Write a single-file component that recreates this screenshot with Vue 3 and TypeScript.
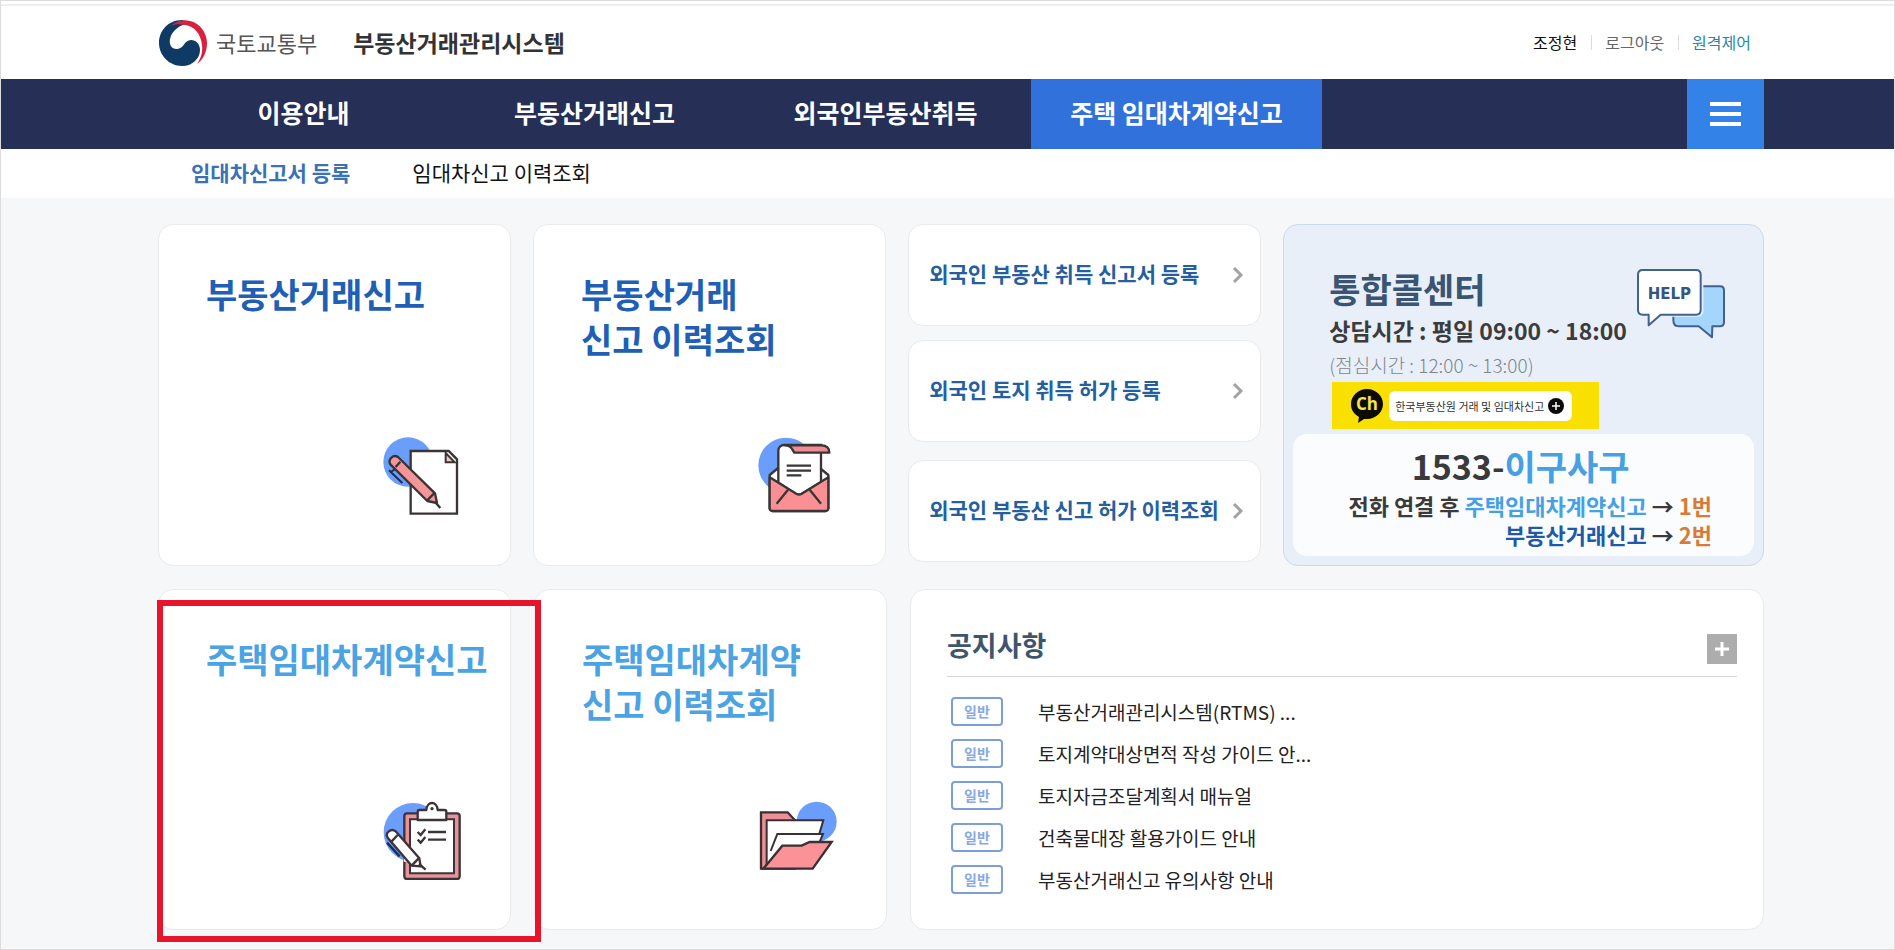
<script setup lang="ts">
interface MenuItem {
  label: string
  active?: boolean
}

const mainMenu: MenuItem[] = [
  { label: '이용안내' },
  { label: '부동산거래신고' },
  { label: '외국인부동산취득' },
  { label: '주택 임대차계약신고', active: true },
]

const subMenu: MenuItem[] = [
  { label: '임대차신고서 등록', active: true },
  { label: '임대차신고 이력조회' },
]

const foreignLinks: string[] = [
  '외국인 부동산 취득 신고서 등록',
  '외국인 토지 취득 허가 등록',
  '외국인 부동산 신고 허가 이력조회',
]

const notices: string[] = [
  '부동산거래관리시스템(RTMS) ...',
  '토지계약대상면적 작성 가이드 안...',
  '토지자금조달계획서 매뉴얼',
  '건축물대장 활용가이드 안내',
  '부동산거래신고 유의사항 안내',
]
</script>

<template>
  <div class="page">
    <header class="header">
      <a href="#" class="brand">
        <svg class="emblem" viewBox="7 7 50 48" aria-hidden="true">
          <path fill="#0f3a66" d="M31 8C17 8 8 19 8 31s10 23 23 23c11 0 18-8 18-16 0-6-4-10-9-10-7 0-7 9-14 9-6 0-8-5-7-10 2-9 10-14 19-16-3-2-6-3-7-3Z" />
          <path fill="#d9213f" d="M20 14c5-5 12-7 19-5 10 2 17 12 17 22 0 9-4 17-10 21 4-6 6-12 5-19C50 22 43 14 34 13c-6-1-10-1-14 1Z" />
        </svg>
        <span class="ministry">국토교통부</span>
        <strong class="system">부동산거래관리시스템</strong>
      </a>
      <div class="user">
        <span class="user-name">조정현</span>
        <a href="#" class="logout">로그아웃</a>
        <a href="#" class="remote">원격제어</a>
      </div>
    </header>

    <nav class="main-nav">
      <a v-for="item in mainMenu" :key="item.label" href="#" class="main-link" :class="{ active: item.active }">{{ item.label }}</a>
      <button type="button" class="all-menu" aria-label="전체메뉴">
        <span class="bar"></span>
        <span class="bar"></span>
        <span class="bar"></span>
      </button>
    </nav>

    <nav class="sub-nav">
      <a v-for="item in subMenu" :key="item.label" href="#" class="sub-link" :class="{ active: item.active }">{{ item.label }}</a>
    </nav>

    <main class="content">
      <div class="row row-top">
        <a href="#" class="card tile deal">
          <h2 class="tile-title">부동산거래신고</h2>
          <svg class="tile-icon" viewBox="700 660 240 240" aria-hidden="true">
            <circle cx="775" cy="738" r="74" fill="#6b9dfb" />
            <path d="M783 705h114l25 25v163H783Z" fill="#fff" stroke="#3a3436" stroke-width="7" />
            <path d="M888 711v28h27Z" fill="#f8c4c6" stroke="#3a3436" stroke-width="6" />
            <path d="M718 763l40 38M723 768l16-10" fill="none" stroke="#1d2c55" stroke-width="6" />
            <path d="M722 745c-8-14 8-31 23-22l111 109 6 29-29-6Z" fill="#f49697" stroke="#3a3436" stroke-width="7" stroke-linejoin="round" />
            <path d="M738 753l14-16M833 853l21-22M856 858l16 18" fill="none" stroke="#3a3436" stroke-width="7" />
          </svg>
        </a>

        <a href="#" class="card tile deal">
          <h2 class="tile-title">부동산거래<br />신고 이력조회</h2>
          <svg class="tile-icon" viewBox="715 660 240 240" aria-hidden="true">
            <circle cx="799" cy="748" r="83" fill="#6b9dfb" />
            <path d="M750 777l88-72 88 72v100l-8 8H758l-8-8Z" fill="#fff" stroke="#3a3436" stroke-width="7" stroke-linejoin="round" />
            <path d="M776 800v-96c0-12 9-17 18-17h110v112l-60 36-16 0Z" fill="#fff" stroke="#3a3436" stroke-width="7" />
            <path d="M797 688h108c16 0 24 9 24 22H824c-4-2-5-22-27-22Z" fill="#f08c93" stroke="#3a3436" stroke-width="7" stroke-linejoin="round" />
            <path d="M801 749h73M801 764h73M801 778h44" stroke="#3a3436" stroke-width="7" />
            <path d="M750 784l81 50q7 4 14 0l81-50v93q0 8-8 8H758q-8 0-8-8Z" fill="#fb9094" stroke="#3a3436" stroke-width="7" stroke-linejoin="round" />
            <path d="M805 821l-34 42M870 821l34 42" stroke="#3a3436" stroke-width="7" />
          </svg>
        </a>

        <div class="foreign">
          <a v-for="label in foreignLinks" :key="label" href="#" class="card foreign-link">
            <span class="foreign-label">{{ label }}</span>
            <svg class="chevron" viewBox="0 0 12 18" aria-hidden="true">
              <path d="M2 2l7 7-7 7" fill="none" stroke="#a3a3a3" stroke-width="3" />
            </svg>
          </a>
        </div>

        <section class="card call-center">
          <div class="call-head">
            <div class="call-info">
              <h2 class="call-title">통합콜센터</h2>
              <p class="call-hours">상담시간 : 평일 09:00 ~ 18:00</p>
              <p class="call-lunch">(점심시간 : 12:00 ~ 13:00)</p>
            </div>
            <svg class="help-icon" viewBox="1095 155 276 225" role="img" aria-label="HELP">
              <path d="M1224 216h126q12 0 12 12v96q0 12-12 12h-23l-1 33-40-33h-60q-16 0-16-18v-90q0-12 14-12Z" fill="#a4d5fd" stroke="#41618e" stroke-width="6" stroke-linejoin="round" />
              <path d="M1116 160h166q18 0 18 18v111q0 18-18 18h-118l-38 36v-36h-10q-20 0-20-18V178q0-18 20-18Z" fill="#e8eff8" />
              <path d="M1118 167h160q14 0 14 14v106q0 14-14 14h-106l-36 32v-32h-18q-14 0-14-14V181q0-14 14-14Z" fill="#fff" stroke="#41618e" stroke-width="6" stroke-linejoin="round" />
              <text x="1198" y="254" text-anchor="middle" class="help-text">HELP</text>
            </svg>
          </div>
          <a href="#" class="kakao">
            <svg class="kakao-icon" viewBox="0 0 34 36" aria-hidden="true">
              <path d="M17 1c9 0 16 7 16 15s-7 15-16 15l-3 0-6 4 1-6C4 26 1 22 1 16 1 8 8 1 17 1Z" fill="#0c0b00" />
              <text x="17" y="22" text-anchor="middle" class="kakao-ch">Ch</text>
            </svg>
            <span class="kakao-pill">
              <span>한국부동산원 거래 및 임대차신고</span>
              <svg class="kakao-plus" viewBox="0 0 16 16" aria-hidden="true">
                <circle cx="8" cy="8" r="8" fill="#0c0b0b" />
                <path d="M8 4v8M4 8h8" stroke="#fff" stroke-width="1.5" />
              </svg>
            </span>
          </a>
          <div class="phone">
            <p class="phone-number">1533-<span class="sky">이구사구</span></p>
            <p class="phone-line">전화 연결 후 <span class="sky">주택임대차계약신고</span> → <span class="orange">1번</span></p>
            <p class="phone-line"><span class="blue">부동산거래신고</span> → <span class="orange">2번</span></p>
          </div>
        </section>
      </div>

      <div class="row row-bottom">
        <div class="marked">
          <a href="#" class="card tile lease">
            <h2 class="tile-title">주택임대차계약신고</h2>
            <svg class="tile-icon" viewBox="700 660 240 240" aria-hidden="true">
              <circle cx="790" cy="757" r="88" fill="#6b9dfb" />
              <rect x="764" y="700" width="166" height="197" rx="8" fill="#e8929a" stroke="#3d3338" stroke-width="7" />
              <path d="M781 718h132v162H781Z" fill="#fff" stroke="#3d3338" stroke-width="6" />
              <path d="M804 720v-24q0-6 6-6h20c2-28 32-28 34 0h20q6 0 6 6v24Z" fill="#fff" stroke="#3d3338" stroke-width="7" stroke-linejoin="round" />
              <circle cx="847" cy="686" r="5" fill="#3d3338" />
              <path d="M804 756l9 9 14-17M804 779l9 9 14-17M835 756h54M835 779h54" fill="none" stroke="#3d3338" stroke-width="7" />
              <path d="M712 788l38 41" fill="none" stroke="#1d2c55" stroke-width="7" />
              <path d="M762 790v55h28Z" fill="#fff" />
              <path d="M714 773c-9-14 10-30 24-19l71 81 4 24-27-2Z" fill="#fff" stroke="#3d3338" stroke-width="7" stroke-linejoin="round" />
              <path d="M726 784l18-19M786 857l21-22M808 852l20 17" fill="none" stroke="#3d3338" stroke-width="7" />
            </svg>
          </a>
          <span class="marker" aria-hidden="true"></span>
        </div>

        <a href="#" class="card tile lease">
          <h2 class="tile-title">주택임대차계약<br />신고 이력조회</h2>
          <svg class="tile-icon" viewBox="715 660 240 240" aria-hidden="true">
            <circle cx="888" cy="725" r="60" fill="#6b9dfb" />
            <path d="M721 697h80l22 24v145H721Z" fill="#ee8f97" stroke="#3a3033" stroke-width="7" />
            <path d="M738 721h170l-18 60-140 72h-12Z" fill="#fff" stroke="#3a3033" stroke-width="6" />
            <path d="M750 813l20-51h137l-10 24-140 62" fill="#fff" stroke="#3a3033" stroke-width="6" />
            <path d="M728 866l57-69h58l24-11h66l-57 80Z" fill="#fb9298" stroke="#3a3033" stroke-width="7" />
          </svg>
        </a>

        <section class="card notice">
          <div class="notice-head">
            <h2 class="notice-title">공지사항</h2>
            <button type="button" class="more" aria-label="공지사항 더보기">
              <svg class="more-icon" viewBox="0 0 14 14" aria-hidden="true">
                <path d="M7 0v14M0 7h14" stroke="#fff" stroke-width="3" />
              </svg>
            </button>
          </div>
          <ul class="notice-list">
            <li v-for="title in notices" :key="title" class="notice-row">
              <span class="badge">일반</span>
              <a href="#" class="notice-link">{{ title }}</a>
            </li>
          </ul>
        </section>
      </div>
    </main>
  </div>
</template>

<style>
body {
  margin: 0;
}
</style>

<style scoped>
.page {
  box-sizing: border-box;
  min-height: 100vh;
  border: 1px solid #dcdcdc;
  background: #f5f7f9;
  color: #111;
  font-family: "Noto Sans CJK KR", sans-serif;
}

a {
  color: inherit;
  text-decoration: none;
}

h2,
p,
ul {
  margin: 0;
  padding: 0;
}

button {
  border: 0;
  padding: 0;
  cursor: pointer;
}

.header,
.main-nav,
.sub-nav,
.content {
  padding-left: 157px;
  padding-right: 130px;
}

.header {
  box-sizing: border-box;
  height: 78px;
  padding-top: 3px;
  display: flex;
  align-items: center;
  justify-content: space-between;
  background: #fff;
  box-shadow: inset 0 3px 0 #fff, inset 0 5px 0 #eee;
}

.brand {
  display: flex;
  align-items: center;
}

.emblem {
  width: 50px;
  height: 48px;
  margin-top: 3px;
}

.ministry {
  margin-left: 8px;
  font-size: 22px;
  line-height: 32px;
  color: #555;
}

.system {
  margin-left: 36px;
  font-size: 23px;
  line-height: 32px;
  color: #333;
}

.user {
  display: flex;
  align-items: center;
  font-size: 16px;
  line-height: 20px;
  padding-right: 13px;
}

.logout,
.remote {
  position: relative;
  margin-left: 28px;
}

.logout::before,
.remote::before {
  content: "";
  position: absolute;
  left: -14px;
  top: 3px;
  height: 15px;
  border-left: 1px solid #ddd;
}

.logout {
  color: #666;
}

.remote {
  color: #2a87a0;
}

.main-nav {
  display: flex;
  height: 70px;
  background: #262f55;
}

.main-link {
  box-sizing: border-box;
  flex: 0 1 291px;
  display: flex;
  align-items: center;
  justify-content: center;
  padding-bottom: 4px;
  color: #fff;
  font-size: 25px;
  font-weight: 700;
  white-space: nowrap;
}

.main-link.active {
  background: #3071db;
}

.all-menu {
  width: 77px;
  margin-left: auto;
  display: flex;
  flex-direction: column;
  align-items: center;
  justify-content: center;
  gap: 6px;
  background: #3282e8;
}

.bar {
  width: 31px;
  height: 4px;
  background: #fff;
}

.sub-nav {
  box-sizing: border-box;
  display: flex;
  align-items: center;
  gap: 62px;
  height: 49px;
  padding-bottom: 4px;
  background: #fff;
  font-size: 21px;
}

.sub-link:first-child {
  margin-left: 33px;
}

.sub-link.active {
  color: #3a72b5;
  font-weight: 700;
}

.content {
  padding-top: 26px;
  padding-bottom: 18px;
}

.row {
  display: grid;
  gap: 22px;
}

.row-top {
  grid-template-columns: 354fr 354fr 354fr 482fr;
  min-height: 342px;
}

.row-bottom {
  grid-template-columns: 353fr 353fr 854fr;
  gap: 23px;
  min-height: 341px;
  margin-top: 23px;
}

.card {
  box-sizing: border-box;
  border: 1px solid #e8eaec;
  border-radius: 15px;
  background: #fff;
}

.tile {
  display: flex;
  flex-direction: column;
  justify-content: space-between;
  padding: 46px 0 49px 47px;
}

.tile-title {
  font-size: 34px;
  line-height: 45px;
  font-weight: 700;
  white-space: nowrap;
}

.deal {
  color: #205fb5;
}

.lease {
  color: #4ba3e3;
}

.tile-icon {
  width: 80px;
  height: 80px;
  align-self: flex-end;
  margin-right: 47px;
}

.foreign {
  display: flex;
  flex-direction: column;
  gap: 14px;
  padding-bottom: 4px;
}

.foreign-link {
  display: flex;
  align-items: center;
  justify-content: space-between;
  height: 102px;
  padding: 0 16px 0 20px;
  color: #265f9f;
  font-size: 21px;
  font-weight: 700;
  white-space: nowrap;
}

.foreign-link:last-child {
  margin-top: auto;
}

.foreign-label {
  padding-bottom: 4px;
}

.chevron {
  width: 12px;
  height: 18px;
}

.call-center {
  display: flex;
  flex-direction: column;
  padding: 39px 9px 9px;
  border-color: #cbd9e8;
  background: #e8eff8;
}

.call-head {
  display: flex;
  justify-content: space-between;
  align-items: flex-start;
  padding: 0 27px 0 36px;
}

.call-info {
  white-space: nowrap;
}

.call-title {
  font-size: 34px;
  line-height: 50px;
  color: #3a5474;
}

.call-hours {
  font-size: 23px;
  line-height: 32px;
  font-weight: 700;
  color: #3c3c3c;
}

.call-lunch {
  padding-top: 2px;
  font-size: 19px;
  line-height: 34px;
  font-weight: 300;
  color: #81868f;
}

.help-icon {
  flex: none;
  width: 92px;
  height: 75px;
  margin-top: 2px;
}

.help-text {
  font-family: "Liberation Sans Narrow", "DejaVu Sans Condensed", sans-serif;
  font-size: 50px;
  font-weight: 700;
  fill: #34567f;
}

.kakao {
  box-sizing: border-box;
  display: flex;
  align-items: center;
  width: 267px;
  height: 47px;
  margin-left: 39px;
  padding-left: 18px;
  background: #f9e000;
}

.kakao-icon {
  width: 34px;
  height: 36px;
}

.kakao-ch {
  font-family: "Open Sans", sans-serif;
  font-size: 17px;
  font-weight: 700;
  fill: #f5e350;
}

.kakao-pill {
  box-sizing: border-box;
  display: flex;
  align-items: center;
  justify-content: space-between;
  width: 183px;
  height: 30px;
  margin-left: 5px;
  padding: 0 8px 0 6px;
  border-radius: 6px;
  background: #fff;
  color: #333;
  font-size: 11px;
  white-space: nowrap;
}

.kakao-plus {
  width: 16px;
  height: 16px;
}

.phone {
  flex: 1;
  margin-top: 5px;
  border-radius: 14px;
  background: #fbfcfe;
  color: #3a3a3a;
  white-space: nowrap;
}

.phone-number {
  padding-top: 7px;
  padding-right: 6px;
  font-size: 34px;
  line-height: 50px;
  font-weight: 700;
  text-align: center;
}

.phone-line {
  padding-right: 42px;
  font-size: 22px;
  line-height: 29px;
  font-weight: 700;
  text-align: right;
}

.sky {
  color: #46a0e4;
}

.blue {
  color: #2059a6;
}

.orange {
  color: #d97b38;
}

.marked {
  position: relative;
  display: grid;
}

.marker {
  position: absolute;
  left: -1px;
  right: -30px;
  top: 11px;
  bottom: -12px;
  border: 6px solid #e8142b;
  pointer-events: none;
}

.notice {
  padding: 36px 26px 30px 36px;
}

.notice-head {
  display: flex;
  align-items: flex-start;
  justify-content: space-between;
  height: 50px;
  border-bottom: 1px solid #d6d6d6;
}

.notice-title {
  font-size: 27px;
  line-height: 38px;
  color: #3f556e;
}

.more {
  display: flex;
  align-items: center;
  justify-content: center;
  width: 30px;
  height: 30px;
  margin-top: 8px;
  background: #adadad;
}

.more-icon {
  width: 14px;
  height: 14px;
}

.notice-list {
  display: grid;
  gap: 13px;
  padding-top: 20px;
  list-style: none;
}

.notice-row {
  display: flex;
  align-items: center;
  gap: 35px;
  height: 29px;
  padding-left: 4px;
}

.badge {
  box-sizing: border-box;
  display: flex;
  align-items: center;
  justify-content: center;
  width: 52px;
  height: 29px;
  padding-bottom: 2px;
  border: 2px solid #7d9fd8;
  border-radius: 4px;
  color: #87a9e6;
  font-size: 14px;
  font-weight: 700;
}

.notice-link {
  color: #222;
  font-size: 19px;
  line-height: 29px;
  white-space: nowrap;
}
</style>
